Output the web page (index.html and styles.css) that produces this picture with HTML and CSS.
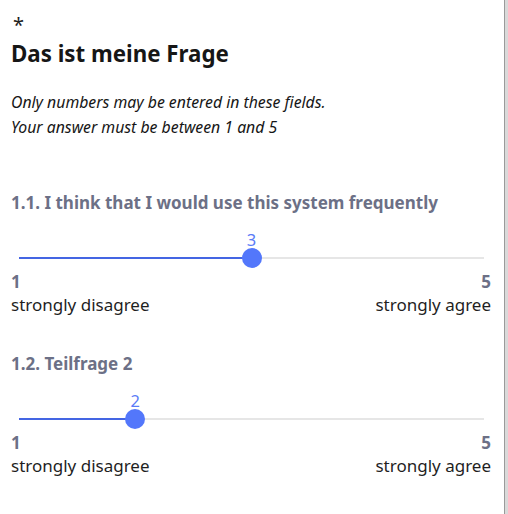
FILE: index.html
```html
<!DOCTYPE html>
<html>
<head>
<meta charset="utf-8">
<link rel="stylesheet" href="styles.css">
</head>
<body>
<div class="page">
  <main class="content">
    <div class="asterisk">*</div>
    <h1 class="title">Das ist meine Frage</h1>
    <p class="hint">Only numbers may be entered in these fields.<br>Your answer must be between 1 and 5</p>

    <section class="sub">
      <h2 class="sub-title">1.1. I think that I would use this system frequently</h2>
      <div class="slider">
        <div class="track"><div class="fill" style="width:50%"></div></div>
        <div class="thumb" style="left:50%"><span class="val">3</span></div>
      </div>
      <div class="ends"><span>1</span><span>5</span></div>
      <div class="labels"><span>strongly disagree</span><span>strongly agree</span></div>
    </section>

    <section class="sub">
      <h2 class="sub-title">1.2. Teilfrage 2</h2>
      <div class="slider">
        <div class="track"><div class="fill" style="width:25%"></div></div>
        <div class="thumb" style="left:25%"><span class="val">2</span></div>
      </div>
      <div class="ends"><span>1</span><span>5</span></div>
      <div class="labels"><span>strongly disagree</span><span>strongly agree</span></div>
    </section>
  </main>
  <aside class="edge"></aside>
</div>
</body>
</html>
```
FILE: styles.css
```css
html, body {
  margin: 0;
  padding: 0;
  background: #fff;
}
body {
  font-family: "Noto Sans", "DejaVu Sans", sans-serif;
  color: #1f1f1f;
}
.page {
  display: flex;
  width: 508px;
  height: 514px;
  overflow: hidden;
}
.content {
  flex: 1;
  padding: 0 13px 0 11px;
}
.edge {
  width: 3px;
  background: #d9d9d9;
  border-left: 1px solid #9a9a9a;
}
.asterisk {
  font-size: 20px;
  line-height: 20px;
  margin-top: 15px;
  height: 20px;
  padding-left: 2px;
  transform-origin: left top;
}
.title {
  font-size: 22.3px;
  font-weight: 700;
  margin: 5px 0 0;
  line-height: 28px;
  color: #161616;
}
.hint {
  font-style: italic;
  font-size: 15.8px;
  line-height: 25px;
  margin: 22px 0 0;
  color: #161616;
}
.sub {
  margin-top: 52px;
}
.sub + .sub {
  margin-top: 36px;
}
.sub-title {
  font-size: 17px;
  font-weight: 700;
  color: #6c7086;
  margin: 0;
  line-height: 22px;
}
.slider {
  position: relative;
  margin: 33px 7px 0 8px;
  height: 22px;
}
.track {
  position: absolute;
  left: 0;
  right: 0;
  top: 10px;
  height: 2px;
  background: #e6e6e6;
}
.fill {
  height: 100%;
  background: #4465e3;
}
.thumb {
  position: absolute;
  top: 1px;
  width: 20px;
  height: 20px;
  margin-left: -10px;
  border-radius: 50%;
  background: #5377fb;
}
.val {
  position: absolute;
  bottom: 19px;
  left: 50%;
  transform: translateX(-50%);
  font-size: 16.5px;
  line-height: 18px;
  color: #5b7cf7;
}
.ends, .labels {
  display: flex;
  justify-content: space-between;
}
.ends {
  font-size: 17px;
  font-weight: 700;
  color: #6c7086;
  line-height: 22px;
  margin-top: 2px;
}
.labels {
  font-size: 17px;
  line-height: 24px;
  color: #1f1f1f;
}
```
